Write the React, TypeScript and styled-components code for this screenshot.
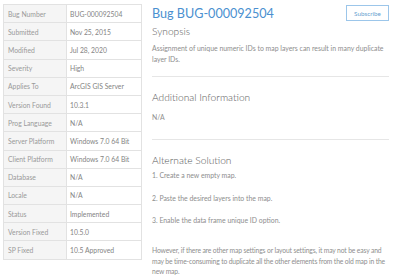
import React from "react";
import styled, { createGlobalStyle } from "styled-components";

const Global = createGlobalStyle`
  html, body { margin: 0; padding: 0; background: #fff; }
  body { font-family: Lato, "Open Sans", sans-serif; }
`;

const Page = styled.div`
  display: flex;
  align-items: flex-start;
  gap: 10px;
  padding: 4px 11px 0 3px;
  width: 400px;
  box-sizing: border-box;
`;

const Table = styled.div`
  width: 137px;
  flex: none;
  display: grid;
  grid-template-columns: 63px 1fr;
  border: 1px solid #e2e2e2;
  border-bottom: none;
`;

const Label = styled.div`
  height: 18.2px;
  box-sizing: border-box;
  background: #f5f5f5;
  border-right: 1px solid #e2e2e2;
  border-bottom: 1px solid #e2e2e2;
  padding-left: 4px;
  display: flex;
  align-items: center;
  font-size: 6.8px;
  font-weight: 400;
  color: #9a9a9a;
  white-space: nowrap;
`;

const Value = styled(Label)`
  background: #fff;
  border-right: none;
  padding-left: 3px;
  color: #848484;
`;

const Main = styled.div`
  flex: 1;
  min-width: 0;
`;

const Header = styled.div`
  display: flex;
  justify-content: space-between;
  align-items: flex-start;
`;

const Title = styled.h1`
  margin: 2px 0 0;
  font-size: 12.6px;
  font-weight: 400;
  color: #4a90d0;
  line-height: 16px;
`;

const Subscribe = styled.button`
  margin-top: 1px;
  width: 43px;
  height: 16px;
  padding: 0;
  border: 1px solid #9cc6ea;
  background: #fff;
  color: #6a9fd0;
  font-family: inherit;
  font-size: 6.3px;
`;

const Section = styled.section<{ $divider?: boolean; $pad?: number }>`
  padding-bottom: ${(p) => (p.$divider ? `${p.$pad ?? 12}px` : "0")};
  border-bottom: ${(p) => (p.$divider ? "1px solid #e6e6e6" : "none")};
  margin-bottom: ${(p) => (p.$divider ? "14px" : "0")};
`;

const Heading = styled.h2<{ $top?: number; $below?: number }>`
  margin: ${(p) => p.$top ?? 0}px 0 ${(p) => p.$below ?? 6}px;
  font-size: 10.2px;
  font-weight: 300;
  color: #595959;
  line-height: 13px;
`;

const Para = styled.p<{ $gap?: number; $tight?: boolean }>`
  margin: 0 0 ${(p) => p.$gap ?? 0}px;
  font-size: ${(p) => (p.$tight ? "6.75px" : "6.9px")};
  letter-spacing: ${(p) => (p.$tight ? "-0.14px" : "0")};
  font-weight: 400;
  line-height: 10.5px;
  color: #8e8e8e;
`;

const rows: [string, string][] = [
  ["Bug Number", "BUG-000092504"],
  ["Submitted", "Nov 25, 2015"],
  ["Modified", "Jul 28, 2020"],
  ["Severity", "High"],
  ["Applies To", "ArcGIS GIS Server"],
  ["Version Found", "10.3.1"],
  ["Prog Language", "N/A"],
  ["Server Platform", "Windows 7.0 64 Bit"],
  ["Client Platform", "Windows 7.0 64 Bit"],
  ["Database", "N/A"],
  ["Locale", "N/A"],
  ["Status", "Implemented"],
  ["Version Fixed", "10.5.0"],
  ["SP Fixed", "10.5 Approved"],
];

export default function App() {
  return (
    <>
      <Global />
      <Page>
        <Table>
          {rows.map(([k, v]) => (
            <React.Fragment key={k}>
              <Label>{k}</Label>
              <Value>{v}</Value>
            </React.Fragment>
          ))}
        </Table>
        <Main>
          <Header>
            <Title>Bug BUG-000092504</Title>
            <Subscribe>Subscribe</Subscribe>
          </Header>
          <Section $divider $pad={12}>
            <Heading $top={3} $below={5}>Synopsis</Heading>
            <Para>
              Assignment of unique numeric IDs to map layers can result in many duplicate layer IDs.
            </Para>
          </Section>
          <Section $divider $pad={16}>
            <Heading $below={8}>Additional Information</Heading>
            <Para>N/A</Para>
          </Section>
          <Section>
            <Heading $top={4} $below={3}>Alternate Solution</Heading>
            <Para $gap={13}>1. Create a new empty map.</Para>
            <Para $gap={11}>2. Paste the desired layers into the map.</Para>
            <Para $gap={20}>3. Enable the data frame unique ID option.</Para>
            <Para $tight>
              However, if there are other map settings or layout settings, it may not be easy and may be time-consuming to duplicate all the other elements from the old map in the new map.
            </Para>
          </Section>
        </Main>
      </Page>
    </>
  );
}
